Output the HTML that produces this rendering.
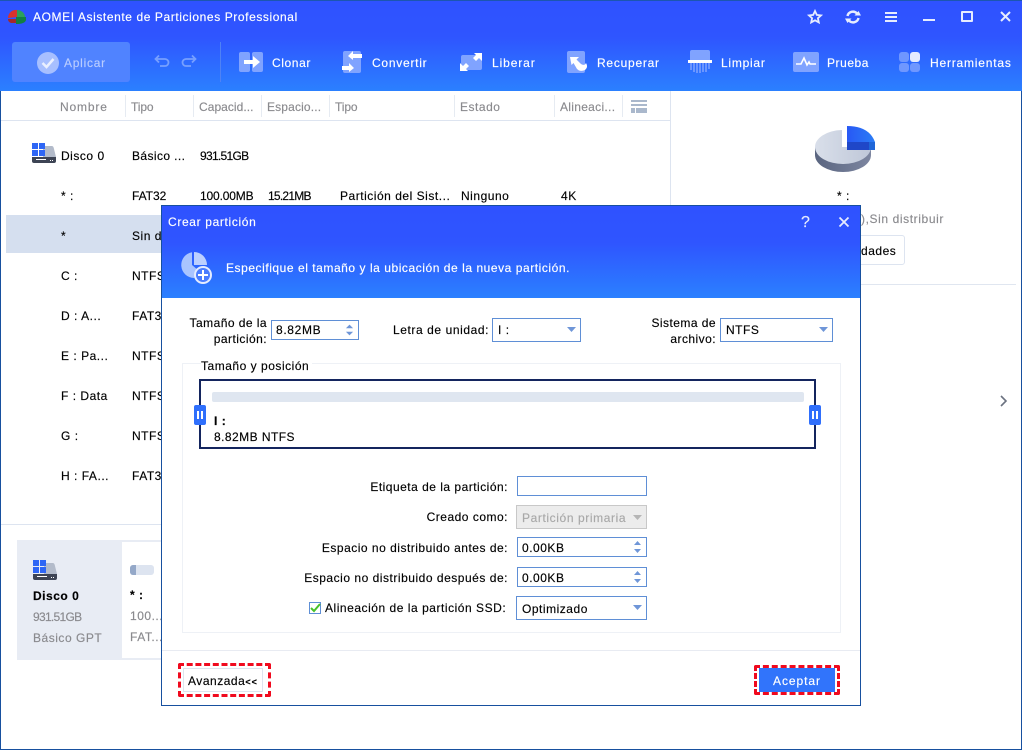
<!DOCTYPE html>
<html><head><meta charset="utf-8"><style>
*{box-sizing:border-box}
html,body{margin:0;padding:0;width:1022px;height:750px;overflow:hidden;background:#fff}
body{position:relative;font-family:"Liberation Sans","DejaVu Sans",sans-serif;font-size:12px;color:#000;letter-spacing:.52px;-webkit-text-stroke:.15px currentColor}
.a,.t{position:absolute}
.t{white-space:nowrap;line-height:16px}
.w{color:#fff}.g{color:#8a8a8e}
.r{text-align:right}
.b{letter-spacing:.75px}
.n{letter-spacing:-.7px}
svg{position:absolute;overflow:visible}
.box{position:absolute;background:#fff;border:1px solid #5f8fd6}
</style></head><body>
<div class="a" style="left:0;top:0;width:1022px;height:750px;border:1px solid #17509f;border-top:0"></div>
<div class="a" style="left:0;top:0;width:1022px;height:91px;background:linear-gradient(#2f52ff 0,#2f55ff 40%,#2b80ff 100%);border-top:1px solid #1c56b0"></div>
<svg style="left:8px;top:9px" width="18" height="16" viewBox="0 0 18 16"><path d="M0 9a8 8 0 0 1 9-8v7z" fill="#d8322e"/><path d="M9 1a8 8 0 0 1 8 6v1H9z" fill="#2da05a"/><path d="M0 10h8v4H3q-3-1-3-4z" fill="#a5282c"/><path d="M8 8h10v3q-1 4-10 4z" fill="#127f43"/></svg>
<div class="t w" style="left:33px;top:9px;letter-spacing:.59px">AOMEI Asistente de Particiones Professional</div>
<svg style="left:807px;top:9px" width="16" height="16" viewBox="0 0 16 16" fill="none" stroke="#e6ecff" stroke-width="1.800"><path d="M8 2l1.800 3.900 4.200.5-3.100 2.800.9 4.200L8 11.300l-3.800 2.100.9-4.200L2 6.400l4.200-.5z"/></svg>
<svg style="left:845px;top:9px" width="16" height="16" viewBox="0 0 16 16" fill="none" stroke="#e6ecff" stroke-width="2.400"><path d="M2.500 7a5.500 5.500 0 0 1 9.500-2.500M13.500 9a5.500 5.500 0 0 1-9.500 2.500"/><path d="M9.500 6.500h6.500l-2.500-4.500zM6.500 9.500H0l2.500 4.500z" fill="#e6ecff" stroke="none"/></svg>
<div class="a" style="left:885px;top:12px;width:12px;height:10px;border-top:2px solid #e6ecff;border-bottom:2px solid #e6ecff"></div><div class="a" style="left:885px;top:16px;width:12px;height:2px;background:#e6ecff"></div>
<div class="a" style="left:923px;top:19px;width:12px;height:2px;background:#e6ecff"></div>
<div class="a" style="left:961px;top:11px;width:12px;height:11px;border:2px solid #e6ecff;border-radius:1px"></div>
<svg style="left:1000px;top:11px" width="11" height="11" viewBox="0 0 11 11" stroke="#e6ecff" stroke-width="2"><path d="M1 1l9 9M10 1l-9 9"/></svg>

<div class="a" style="left:12px;top:42px;width:118px;height:40px;background:#5083ff;border-radius:3px"></div>
<svg style="left:37px;top:52px" width="22" height="22" viewBox="0 0 22 22"><circle cx="11" cy="11" r="11" fill="#a7bfff"/><path d="M5.500 11l4 4 7-8" fill="none" stroke="#eaf0ff" stroke-width="2.500"/></svg>
<div class="t b" style="left:64px;top:55px;color:#b9ccff">Aplicar</div>
<svg style="left:154px;top:54px" width="42" height="14" viewBox="0 0 42 14" fill="none" stroke="#77a0ff" stroke-width="1.800"><path d="M2 5h9a3.500 3.500 0 0 1 0 7H6M5 1.500L1.500 5 5 8.500"/><path d="M41 5h-9a3.500 3.500 0 0 0 0 7h5M38 1.500L41.500 5 38 8.500"/></svg>
<div class="a" style="left:220px;top:42px;width:1px;height:40px;background:#4f82f5"></div>

<div class="a" style="left:239px;top:52px;width:24px;height:20px"><div class="a" style="left:0;top:0;width:11px;height:20px;background:#80a3ff;border-radius:2px"></div><div class="a" style="left:13px;top:0;width:11px;height:20px;background:#80a3ff;border-radius:2px"></div></div>
<svg style="left:244px;top:55px" width="18" height="14" viewBox="0 0 18 14"><path d="M0 5h9V1l7 6-7 6V9H0z" fill="#fff"/></svg>
<div class="t w b" style="left:272px;top:55px;letter-spacing:.6px">Clonar</div>

<div class="a" style="left:343px;top:51px;width:18px;height:22px;background:#80a3ff;border-radius:2px"></div>
<svg style="left:341px;top:51px" width="22" height="22" viewBox="0 0 22 22" fill="#fff"><path d="M21 3h-9V0L7 5l5 4V7h9zM1 15h7v-3l5 5-5 4v-2H1z"/></svg>
<div class="t w b" style="left:372px;top:55px">Convertir</div>

<div class="a" style="left:461px;top:55px;width:21px;height:15px;background:#80a3ff;border-radius:2px"></div>
<svg style="left:460px;top:53px" width="23" height="18" viewBox="0 0 23 18" fill="#fff"><path d="M22 0v8l-3-3-3 3-3-3 3-3-2-2zM0 18v-8l3 3 3-3 3 3-3 3 2 2z"/></svg>
<div class="t w b" style="left:492px;top:55px;letter-spacing:.9px">Liberar</div>

<div class="a" style="left:567px;top:51px;width:18px;height:22px;background:#80a3ff;border-radius:2px"></div>
<svg style="left:570px;top:57px" width="19" height="15" viewBox="0 0 19 15"><path d="M0 0h9L6.500 2.500 11 7q2 1.500 4 .5l1-1.500q2.500 4-1 7-3 1.500-6 .5L7 12 3.500 6 1.500 8z" fill="#fff"/></svg>
<div class="t w b" style="left:597px;top:55px">Recuperar</div>

<div class="a" style="left:690px;top:50px;width:20px;height:12px;background:#80a3ff;border-radius:2px 2px 0 0"></div>
<div class="a" style="left:688px;top:60px;width:24px;height:3px;background:#fff"></div>
<svg style="left:690px;top:63px" width="20" height="10" viewBox="0 0 20 10" stroke="#80a3ff" stroke-width="1.500"><path d="M1 0v7M4 0v9M7 0v10M10 0v10M13 0v9M16 0v9M19 0v6"/></svg>
<div class="t w b" style="left:721px;top:55px">Limpiar</div>

<div class="a" style="left:793px;top:52px;width:26px;height:20px;background:#80a3ff;border-radius:2px"></div>
<svg style="left:795px;top:56px" width="22" height="11" viewBox="0 0 22 11" fill="none" stroke="#fff" stroke-width="1.600"><path d="M1 8h5l3-6 3 7 2-3 1 2h6"/></svg>
<div class="t w b" style="left:827px;top:55px;letter-spacing:.55px">Prueba</div>

<div class="a" style="left:899px;top:52px;width:10px;height:10px;background:#6f97ff;border-radius:3px"></div>
<div class="a" style="left:910px;top:52px;width:10px;height:10px;background:#e4ebff;border-radius:3px"></div>
<div class="a" style="left:899px;top:63px;width:10px;height:9px;background:#6f97ff;border-radius:3px"></div>
<div class="a" style="left:910px;top:63px;width:10px;height:9px;background:#6f97ff;border-radius:3px"></div>
<div class="t w b" style="left:930px;top:55px;letter-spacing:.8px">Herramientas</div>

<!-- table header -->
<div class="a" style="left:1px;top:120px;width:669px;height:1px;background:#dde4f0"></div>
<div class="a" style="left:670px;top:91px;width:1px;height:614px;background:#dde4f0"></div>
<div class="a" style="left:125px;top:95px;width:1px;height:22px;background:#e6ebf2"></div>
<div class="a" style="left:193px;top:95px;width:1px;height:22px;background:#e6ebf2"></div>
<div class="a" style="left:261px;top:95px;width:1px;height:22px;background:#e6ebf2"></div>
<div class="a" style="left:329px;top:95px;width:1px;height:22px;background:#e6ebf2"></div>
<div class="a" style="left:454px;top:95px;width:1px;height:22px;background:#e6ebf2"></div>
<div class="a" style="left:554px;top:95px;width:1px;height:22px;background:#e6ebf2"></div>
<div class="a" style="left:622px;top:95px;width:1px;height:22px;background:#e6ebf2"></div>
<div class="t g" style="left:60px;top:99px;letter-spacing:.85px">Nombre</div>
<div class="t g" style="left:131px;top:99px;letter-spacing:-.1px">Tipo</div>
<div class="t g" style="left:199px;top:99px;letter-spacing:.05px">Capacid...</div>
<div class="t g" style="left:267px;top:99px;letter-spacing:.15px">Espacio...</div>
<div class="t g" style="left:335px;top:99px;letter-spacing:-.1px">Tipo</div>
<div class="t g" style="left:460px;top:99px">Estado</div>
<div class="t g" style="left:560px;top:99px;letter-spacing:.3px">Alineaci...</div>
<div class="a" style="left:631px;top:100px;width:16px;height:2px;background:#aab8cc"></div>
<div class="a" style="left:631px;top:104px;width:16px;height:2px;background:#aab8cc"></div>
<div class="a" style="left:631px;top:108px;width:4px;height:5px;background:#aab8cc"></div>
<div class="a" style="left:636px;top:108px;width:11px;height:5px;background:#aab8cc"></div>

<!-- rows -->
<div class="a" style="left:6px;top:215px;width:200px;height:38px;background:#d5dfef"></div>
<svg style="left:32px;top:143px" width="24" height="20" viewBox="0 0 24 20"><path d="M11 3h9q1.500 0 2 3l2 8H11z" fill="#b3bbca"/><path d="M0 14h24v4q0 2-2 2H2q-2 0-2-2z" fill="#3d4454"/><path d="M4 16h10v1H4zM18 17h1v1h-1zM20 17h1v1h-1z" fill="#fff"/><path d="M0 0h6v6H0zM7 0h6v6H7zM0 7h6v6H0zM7 7h6v6H7z" fill="#2e66f5"/></svg>
<div class="t" style="left:61px;top:148px">Disco 0</div>
<div class="t" style="left:132px;top:148px;letter-spacing:.4px">Básico ...</div>
<div class="t n" style="left:200px;top:148px">931.51GB</div>
<div class="t" style="left:61px;top:188px">* :</div>
<div class="t" style="left:132px;top:188px;letter-spacing:-.05px">FAT32</div>
<div class="t" style="left:200px;top:188px;letter-spacing:-.15px">100.00MB</div>
<div class="t" style="left:268px;top:188px;letter-spacing:-.75px">15.21MB</div>
<div class="t" style="left:340px;top:188px">Partición del Sist...</div>
<div class="t" style="left:461px;top:188px">Ninguno</div>
<div class="t" style="left:561px;top:188px">4K</div>
<div class="t" style="left:61px;top:228px">*</div><div class="t" style="left:132px;top:228px">Sin d</div>
<div class="t" style="left:61px;top:268px">C :</div><div class="t" style="left:132px;top:268px">NTFS</div>
<div class="t" style="left:61px;top:308px">D : A...</div><div class="t" style="left:132px;top:308px">FAT3</div>
<div class="t" style="left:61px;top:348px">E : Pa...</div><div class="t" style="left:132px;top:348px">NTFS</div>
<div class="t" style="left:61px;top:388px">F : Data</div><div class="t" style="left:132px;top:388px">NTFS</div>
<div class="t" style="left:61px;top:428px">G :</div><div class="t" style="left:132px;top:428px">NTFS</div>
<div class="t" style="left:61px;top:468px">H : FA...</div><div class="t" style="left:132px;top:468px">FAT3</div>

<!-- bottom -->
<div class="a" style="left:1px;top:524px;width:669px;height:1px;background:#dde4f0"></div>
<div class="a" style="left:17px;top:540px;width:150px;height:120px;background:#e8ecf4"></div>
<div class="a" style="left:122px;top:542px;width:45px;height:116px;background:#fff"></div>
<svg style="left:33px;top:560px" width="24" height="20" viewBox="0 0 24 20"><path d="M11 3h9q1.500 0 2 3l2 8H11z" fill="#b3bbca"/><path d="M0 14h24v4q0 2-2 2H2q-2 0-2-2z" fill="#3d4454"/><path d="M4 16h10v1H4zM18 17h1v1h-1zM20 17h1v1h-1z" fill="#fff"/><path d="M0 0h6v6H0zM7 0h6v6H7zM0 7h6v6H0zM7 7h6v6H7z" fill="#2e66f5"/></svg>
<div class="t" style="left:33px;top:588px;font-weight:bold">Disco 0</div>
<div class="t g n" style="left:33px;top:609px">931.51GB</div>
<div class="t g" style="left:33px;top:630px">Básico GPT</div>
<div class="a" style="left:130px;top:565px;width:24px;height:10px;background:#dde4f0;border-radius:3px"></div>
<div class="a" style="left:130px;top:565px;width:6px;height:10px;background:#94a8c8;border-radius:3px 0 0 3px"></div>
<div class="t" style="left:130px;top:587px;font-weight:bold">* :</div>
<div class="t g" style="left:130px;top:608px">100....</div>
<div class="t g" style="left:130px;top:629px">FAT...</div>

<!-- right panel -->
<svg style="left:814px;top:125px" width="62" height="48" viewBox="0 0 62 48"><defs><linearGradient id="p1" x1="0" x2="1"><stop offset="0" stop-color="#5a6580"/><stop offset="1" stop-color="#7d86a0"/></linearGradient><linearGradient id="p2" x1="0" x2="1"><stop offset="0" stop-color="#d9dfea"/><stop offset="1" stop-color="#bfc7d8"/></linearGradient><linearGradient id="p3" x1="0" x2="1"><stop offset="0" stop-color="#2858f5"/><stop offset="1" stop-color="#2b7df5"/></linearGradient></defs><path d="M1 22v8a28 17 0 0 0 56 0v-8z" fill="url(#p1)"/><path d="M28 5A28 17 0 1 0 57 22H28z" fill="url(#p2)"/><path d="M33 17h28v8H33z" fill="#1f47c8"/><path d="M55 17h6v8h-6z" fill="#1f66d8"/><path d="M33 1Q55 1 61 17H33z" fill="url(#p3)"/></svg>
<div class="t" style="left:837px;top:188px">* :</div>
<div class="t g" style="left:861px;top:211px;letter-spacing:.6px">),Sin distribuir</div>
<div class="a" style="left:800px;top:235px;width:105px;height:30px;border:1px solid #dde4f0;border-radius:3px"></div>
<div class="t" style="left:861px;top:243px">dades</div>
<div class="a" style="left:671px;top:284px;width:345px;height:1px;background:#e0e6f0"></div>
<svg style="left:999px;top:394px" width="9" height="14" viewBox="0 0 9 14" fill="none" stroke="#6b7280" stroke-width="1.600"><path d="M2 2l5 5-5 5"/></svg>

<!-- dialog -->
<div class="a" style="left:161px;top:205px;width:700px;height:501px;background:#fff;border:1px solid #17509f"></div>
<div class="a" style="left:162px;top:206px;width:698px;height:92px;background:linear-gradient(#2f52ff 0,#2f55ff 40%,#2b80ff 100%)"></div>
<div class="t w" style="left:168px;top:214px;letter-spacing:.65px">Crear partición</div>
<div class="t" style="left:801px;top:215px;color:#e6ecff;font-size:16px;letter-spacing:0">?</div>
<svg style="left:838px;top:216px" width="12" height="12" viewBox="0 0 12 12" stroke="#e6ecff" stroke-width="1.800"><path d="M1.500 1.500l9 9M10.500 1.500l-9 9"/></svg>
<svg style="left:181px;top:251px" width="32" height="32" viewBox="0 0 32 32"><path d="M11 1.200A13 13 0 0 0 13 27L18 20l-7-6z" fill="#a9c4ff"/><path d="M13 1A13 13 0 0 1 26 14H13z" fill="#bcd0ff"/><circle cx="22" cy="24" r="9" fill="#e4ecff"/><circle cx="22" cy="24" r="7" fill="#4a7dff"/><path d="M22 19v10M17 24h10" stroke="#fff" stroke-width="2"/></svg>
<div class="t w" style="left:226px;top:260px;letter-spacing:.55px">Especifique el tamaño y la ubicación de la nueva partición.</div>

<div class="t r" style="left:170px;top:315px;width:97px;line-height:16px;white-space:normal;letter-spacing:.45px">Tamaño de la partición:</div>
<div class="box" style="left:271px;top:320px;width:88px;height:20px"></div>
<div class="t" style="left:276px;top:322px;letter-spacing:.65px">8.82MB</div>
<svg style="left:345px;top:323px" width="9" height="14" viewBox="0 0 10 14" fill="#6f96d8"><path d="M5 1l4 4H1zM5 13l4-4H1z"/></svg>
<div class="t" style="left:393px;top:322px;letter-spacing:.58px">Letra de unidad:</div>
<div class="box" style="left:492px;top:318px;width:89px;height:24px"></div>
<div class="t" style="left:498px;top:322px">I :</div>
<svg style="left:567px;top:327px" width="9" height="5" viewBox="0 0 12 7" preserveAspectRatio="none" fill="#6f96d8"><path d="M0 0h12L6 7z"/></svg>
<div class="t r" style="left:630px;top:315px;width:86px;white-space:normal;letter-spacing:.45px">Sistema de archivo:</div>
<div class="box" style="left:720px;top:318px;width:113px;height:24px"></div>
<div class="t" style="left:726px;top:322px">NTFS</div>
<svg style="left:819px;top:327px" width="9" height="5" viewBox="0 0 12 7" preserveAspectRatio="none" fill="#6f96d8"><path d="M0 0h12L6 7z"/></svg>

<div class="a" style="left:182px;top:363px;width:659px;height:270px;border:1px solid #eef1f6"></div>
<div class="t" style="left:201px;top:358px;background:#fff;padding-right:3px">Tamaño y posición</div>
<div class="a" style="left:199px;top:379px;width:617px;height:70px;border:2px solid #14255e;background:#fff"></div>
<div class="a" style="left:212px;top:392px;width:592px;height:10px;background:#dfe6f0;border-radius:2px"></div>
<div class="a" style="left:194px;top:405px;width:12px;height:20px;background:#2f6ffc;border-radius:2px"></div>
<div class="a" style="left:197px;top:411px;width:2px;height:8px;background:#fff"></div><div class="a" style="left:201px;top:411px;width:2px;height:8px;background:#fff"></div>
<div class="a" style="left:809px;top:405px;width:12px;height:20px;background:#2f6ffc;border-radius:2px"></div>
<div class="a" style="left:812px;top:411px;width:2px;height:8px;background:#fff"></div><div class="a" style="left:816px;top:411px;width:2px;height:8px;background:#fff"></div>
<div class="t" style="left:214px;top:413px;font-weight:bold">I :</div>
<div class="t" style="left:214px;top:429px;letter-spacing:.45px">8.82MB NTFS</div>

<div class="t r" style="left:290px;top:479px;width:218px;letter-spacing:.49px">Etiqueta de la partición:</div>
<div class="box" style="left:517px;top:476px;width:130px;height:20px"></div>
<div class="t r" style="left:290px;top:509px;width:218px;letter-spacing:.5px">Creado como:</div>
<div class="a" style="left:516px;top:505px;width:131px;height:24px;background:#ececec;border:1px solid #c8c8c8"></div>
<div class="t" style="left:522px;top:510px;color:#a8a8a8;letter-spacing:.6px">Partición primaria</div>
<svg style="left:633px;top:515px" width="9" height="5" viewBox="0 0 10 6" preserveAspectRatio="none" fill="#b5b5b5"><path d="M0 0h10L5 6z"/></svg>
<div class="t r" style="left:290px;top:540px;width:218px;letter-spacing:.5px">Espacio no distribuido antes de:</div>
<div class="box" style="left:517px;top:537px;width:130px;height:20px"></div>
<div class="t" style="left:522px;top:540px">0.00KB</div>
<svg style="left:633px;top:540px" width="9" height="14" viewBox="0 0 9 14" fill="#6f96d8"><path d="M4.500 1L8 5H1zM4.500 13L8 9H1z"/></svg>
<div class="t r" style="left:290px;top:570px;width:218px;letter-spacing:.52px">Espacio no distribuido después de:</div>
<div class="box" style="left:517px;top:567px;width:130px;height:20px"></div>
<div class="t" style="left:522px;top:570px">0.00KB</div>
<svg style="left:633px;top:570px" width="9" height="14" viewBox="0 0 9 14" fill="#6f96d8"><path d="M4.500 1L8 5H1zM4.500 13L8 9H1z"/></svg>
<div class="a" style="left:309px;top:602px;width:12px;height:12px;background:#fff;border:1px solid #5f8fd6"></div>
<svg style="left:310px;top:603px" width="11" height="10" viewBox="0 0 11 10" fill="none" stroke="#47c22a" stroke-width="2"><path d="M1 5l3 3 6-7"/></svg>
<div class="t" style="left:325px;top:600px;letter-spacing:.53px">Alineación de la partición SSD:</div>
<div class="box" style="left:516px;top:596px;width:131px;height:24px"></div>
<div class="t" style="left:522px;top:601px">Optimizado</div>
<svg style="left:633px;top:605px" width="9" height="5" viewBox="0 0 12 7" preserveAspectRatio="none" fill="#6f96d8"><path d="M0 0h12L6 7z"/></svg>

<div class="a" style="left:162px;top:650px;width:698px;height:1px;background:#e8ebf2"></div>
<div class="a" style="left:178px;top:663px;width:93px;height:34px;border:3px dashed #f00a1e;border-radius:2px"></div>
<div class="a" style="left:183px;top:668px;width:80px;height:24px;border:1px solid #dde4ee"></div>
<div class="t" style="left:188px;top:673px">Avanzada<span style="font-size:9px;font-weight:bold;letter-spacing:1px">&lt;&lt;</span></div>
<div class="a" style="left:754px;top:665px;width:86px;height:30px;border:3px dashed #f00a1e;border-radius:2px"></div>
<div class="a" style="left:759px;top:668px;width:76px;height:24px;background:#3174fb"></div>
<div class="t w" style="left:773px;top:673px;letter-spacing:.95px">Aceptar</div>
</body></html>
